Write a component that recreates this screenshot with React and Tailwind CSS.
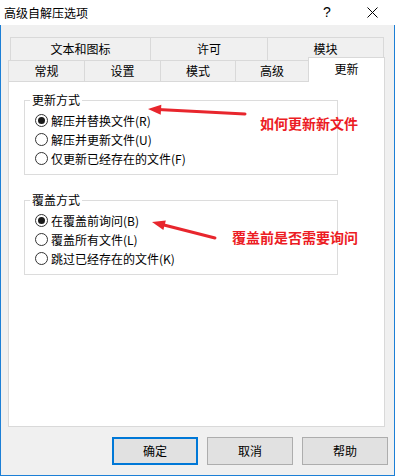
import React from 'react'

const cjk = { fontFamily: '"Noto Sans CJK SC", "Noto Sans", sans-serif' }

function Radio({ checked, label }) {
  return (
    <div className="flex items-center h-[19px] pl-[10px]">
      <span className="w-[13px] h-[13px] rounded-full border border-[#333333] bg-white flex items-center justify-center shrink-0">
        {checked && <span className="w-[7px] h-[7px] rounded-full bg-[#1a1a1a]" />}
      </span>
      <span className="ml-[3px] text-[12px] leading-[16px] text-black">{label}</span>
    </div>
  )
}

function Group({ title, options, className }) {
  return (
    <fieldset className={`ml-[15px] w-[314px] border border-[#dcdcdc] pt-[3px] pb-[6px] ${className}`}>
      <legend className="ml-[5px] px-[2px] text-[12px] leading-[16px] text-black">{title}</legend>
      {options.map((o, i) => (
        <Radio key={i} checked={i === 0} label={o} />
      ))}
    </fieldset>
  )
}

export default function App() {
  const backTabs = [
    { name: '文本和图标', w: 'w-[140px]' },
    { name: '许可', w: 'w-[117px]' },
    { name: '模块', w: 'w-[117px] border-r' },
  ]
  const frontTabs = [
    { name: '常规', w: 'w-[76px]' },
    { name: '设置', w: 'w-[76px]' },
    { name: '模式', w: 'w-[75px]' },
    { name: '高级', w: 'w-[73px]' },
  ]

  return (
    <div className="relative w-[395px] h-[476px] bg-[#f0f0f0] flex flex-col overflow-hidden" style={cjk}>
      {/* title bar */}
      <div className="h-[25px] bg-white flex items-center shrink-0">
        <span className="pl-[4px] text-[12px] text-black">高级自解压选项</span>
        <div className="ml-auto flex h-full">
          <div className="w-[46px] flex items-center justify-center text-[14px] text-black" style={{ fontFamily: '"Liberation Sans", sans-serif' }}>?</div>
          <div className="w-[45px] flex items-center justify-center">
            <svg width="11" height="11" viewBox="0 0 11 11">
              <path d="M0.5 0.5 L10.5 10.5 M10.5 0.5 L0.5 10.5" stroke="#000" strokeWidth="1" />
            </svg>
          </div>
        </div>
      </div>

      {/* body */}
      <div className="flex-1 flex flex-col border-x border-b border-[#1c7fd6]">
        {/* back tab row */}
        <div className="mt-[12px] ml-[9px] flex h-[23px]">
          {backTabs.map(t => (
            <div key={t.name} className={`${t.w} border-t border-l border-[#d9d9d9] flex items-center justify-center text-[12px] text-black`}>
              {t.name}
            </div>
          ))}
        </div>

        {/* front tab row */}
        <div className="ml-[7px] flex items-end h-[21px]">
          {frontTabs.map(t => (
            <div key={t.name} className={`${t.w} h-[21px] border-t border-l border-[#d9d9d9] flex items-center justify-center text-[12px] text-black`}>
              {t.name}
            </div>
          ))}
          <div className="relative z-10 w-[77px] h-[25px] -mb-px bg-white border-t border-x border-[#d9d9d9] flex items-start justify-center pt-[2px] text-[12px] text-black">
            更新
          </div>
        </div>

        {/* panel */}
        <div className="ml-[7px] w-[377px] h-[346px] bg-white border border-[#d9d9d9] flex flex-col">
          <Group
            title="更新方式"
            className="mt-[10px]"
            options={['解压并替换文件(R)', '解压并更新文件(U)', '仅更新已经存在的文件(F)']}
          />
          <Group
            title="覆盖方式"
            className="mt-[17px]"
            options={['在覆盖前询问(B)', '覆盖所有文件(L)', '跳过已经存在的文件(K)']}
          />
        </div>

        {/* buttons */}
        <div className="mt-[10px] flex justify-end gap-[9px] mr-[6px]">
          <button className="w-[86px] h-[28px] bg-[#e1e1e1] border-2 border-[#0078d7] text-[12px] text-black">确定</button>
          <button className="w-[86px] h-[28px] bg-[#e1e1e1] border border-[#adadad] text-[12px] text-black">取消</button>
          <button className="w-[86px] h-[28px] bg-[#e1e1e1] border border-[#adadad] text-[12px] text-black">帮助</button>
        </div>
      </div>

      {/* annotations */}
      <svg className="absolute left-0 top-0 pointer-events-none" width="395" height="476">
        <line x1="158" y1="109.6" x2="245" y2="114" stroke="#e8262d" strokeWidth="3" strokeLinecap="round" />
        <polygon points="148,109 160.7,114.7 161.3,104.7" fill="#e8262d" />
        <line x1="162" y1="224.5" x2="215" y2="238" stroke="#e8262d" strokeWidth="3" strokeLinecap="round" />
        <polygon points="152,222 163.4,230 165.8,220.4" fill="#e8262d" />
      </svg>
      <span className="absolute left-[260px] top-[113px] text-[14px] leading-[20px] font-bold text-[#ec1c24]">如何更新新文件</span>
      <span className="absolute left-[232px] top-[227px] text-[14px] leading-[20px] font-bold text-[#ec1c24]">覆盖前是否需要询问</span>
    </div>
  )
}
